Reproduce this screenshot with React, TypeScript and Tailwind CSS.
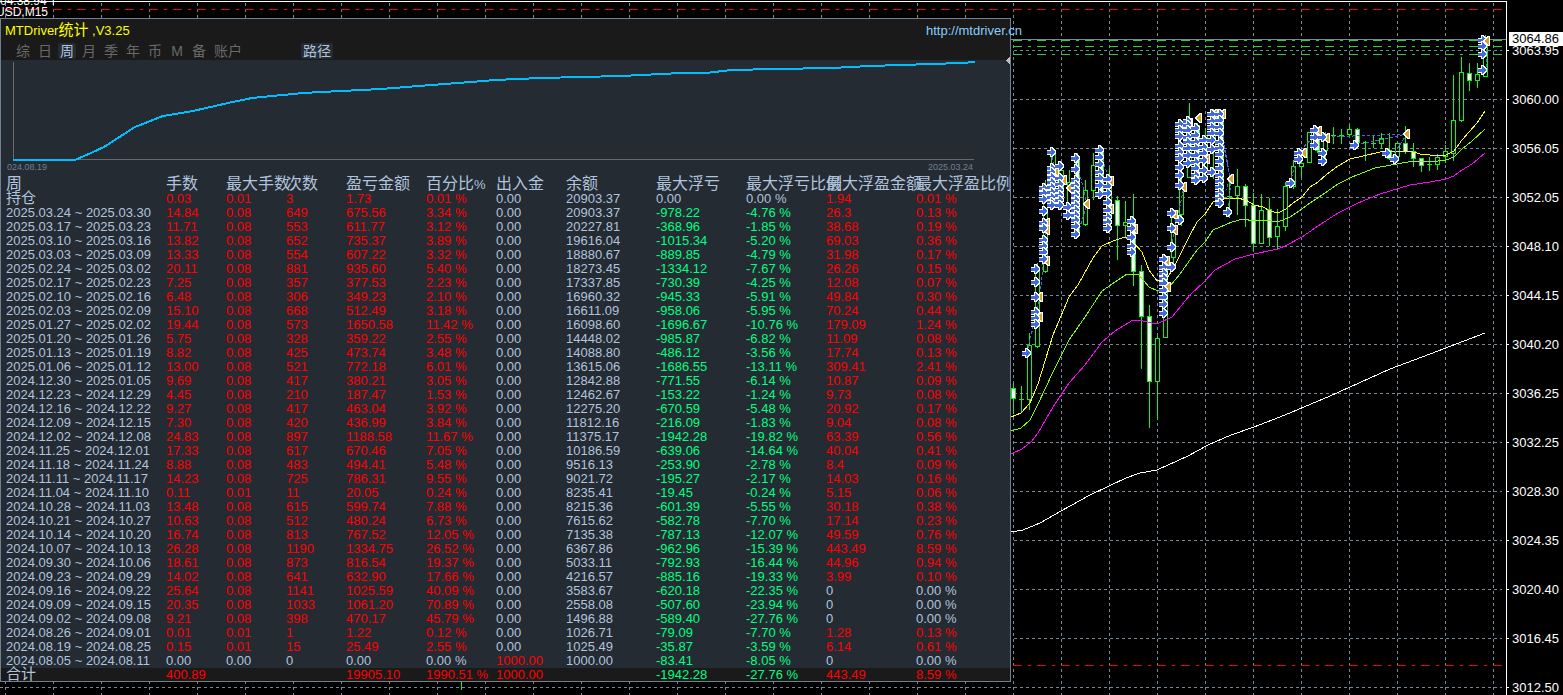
import React from "react";

type Tone = "red" | "green" | "plain";

const HEADERS = ["周", "手数", "最大手数", "次数", "盈亏金额", "百分比%", "出入金", "余额", "最大浮亏", "最大浮亏比例", "最大浮盈金额", "最大浮盈比例"];

// period | lots | max lots | count | profit | percent | deposit | balance | drawdown | drawdown % | float profit | float profit %
const ROWS = `持仓|0.03|0.01|3|1.73|0.01 %|0.00|20903.37|0.00|0.00 %|1.94|0.01 %
2025.03.24 ~ 2025.03.30|14.84|0.08|649|675.56|3.34 %|0.00|20903.37|-978.22|-4.76 %|26.3|0.13 %
2025.03.17 ~ 2025.03.23|11.71|0.08|553|611.77|3.12 %|0.00|20227.81|-368.96|-1.85 %|38.68|0.19 %
2025.03.10 ~ 2025.03.16|13.82|0.08|652|735.37|3.89 %|0.00|19616.04|-1015.34|-5.20 %|69.03|0.36 %
2025.03.03 ~ 2025.03.09|13.33|0.08|554|607.22|3.32 %|0.00|18880.67|-889.85|-4.79 %|31.98|0.17 %
2025.02.24 ~ 2025.03.02|20.11|0.08|881|935.60|5.40 %|0.00|18273.45|-1334.12|-7.67 %|26.26|0.15 %
2025.02.17 ~ 2025.02.23|7.25|0.08|357|377.53|2.23 %|0.00|17337.85|-730.39|-4.25 %|12.08|0.07 %
2025.02.10 ~ 2025.02.16|6.48|0.08|306|349.23|2.10 %|0.00|16960.32|-945.33|-5.91 %|49.84|0.30 %
2025.02.03 ~ 2025.02.09|15.10|0.08|668|512.49|3.18 %|0.00|16611.09|-958.06|-5.95 %|70.24|0.44 %
2025.01.27 ~ 2025.02.02|19.44|0.08|573|1650.58|11.42 %|0.00|16098.60|-1696.67|-10.76 %|179.09|1.24 %
2025.01.20 ~ 2025.01.26|5.75|0.08|328|359.22|2.55 %|0.00|14448.02|-985.87|-6.82 %|11.09|0.08 %
2025.01.13 ~ 2025.01.19|8.82|0.08|425|473.74|3.48 %|0.00|14088.80|-486.12|-3.56 %|17.74|0.13 %
2025.01.06 ~ 2025.01.12|13.00|0.08|521|772.18|6.01 %|0.00|13615.06|-1686.55|-13.11 %|309.41|2.41 %
2024.12.30 ~ 2025.01.05|9.69|0.08|417|380.21|3.05 %|0.00|12842.88|-771.55|-6.14 %|10.87|0.09 %
2024.12.23 ~ 2024.12.29|4.45|0.08|210|187.47|1.53 %|0.00|12462.67|-153.22|-1.24 %|9.73|0.08 %
2024.12.16 ~ 2024.12.22|9.27|0.08|417|463.04|3.92 %|0.00|12275.20|-670.59|-5.48 %|20.92|0.17 %
2024.12.09 ~ 2024.12.15|7.30|0.08|420|436.99|3.84 %|0.00|11812.16|-216.09|-1.83 %|9.04|0.08 %
2024.12.02 ~ 2024.12.08|24.83|0.08|897|1188.58|11.67 %|0.00|11375.17|-1942.28|-19.82 %|63.39|0.56 %
2024.11.25 ~ 2024.12.01|17.33|0.08|617|670.46|7.05 %|0.00|10186.59|-639.06|-14.64 %|40.04|0.41 %
2024.11.18 ~ 2024.11.24|8.88|0.08|483|494.41|5.48 %|0.00|9516.13|-253.90|-2.78 %|8.4|0.09 %
2024.11.11 ~ 2024.11.17|14.23|0.08|725|786.31|9.55 %|0.00|9021.72|-195.27|-2.17 %|14.03|0.16 %
2024.11.04 ~ 2024.11.10|0.11|0.01|11|20.05|0.24 %|0.00|8235.41|-19.45|-0.24 %|5.15|0.06 %
2024.10.28 ~ 2024.11.03|13.48|0.08|615|599.74|7.88 %|0.00|8215.36|-601.39|-5.55 %|30.18|0.38 %
2024.10.21 ~ 2024.10.27|10.63|0.08|512|480.24|6.73 %|0.00|7615.62|-582.78|-7.70 %|17.14|0.23 %
2024.10.14 ~ 2024.10.20|16.74|0.08|813|767.52|12.05 %|0.00|7135.38|-787.13|-12.07 %|49.59|0.76 %
2024.10.07 ~ 2024.10.13|26.28|0.08|1190|1334.75|26.52 %|0.00|6367.86|-962.96|-15.39 %|443.49|8.59 %
2024.09.30 ~ 2024.10.06|18.61|0.08|873|816.54|19.37 %|0.00|5033.11|-792.93|-16.44 %|44.96|0.94 %
2024.09.23 ~ 2024.09.29|14.02|0.08|641|632.90|17.66 %|0.00|4216.57|-885.16|-19.33 %|3.99|0.10 %
2024.09.16 ~ 2024.09.22|25.64|0.08|1141|1025.59|40.09 %|0.00|3583.67|-620.18|-22.35 %|0|0.00 %
2024.09.09 ~ 2024.09.15|20.35|0.08|1033|1061.20|70.89 %|0.00|2558.08|-507.60|-23.94 %|0|0.00 %
2024.09.02 ~ 2024.09.08|9.21|0.08|398|470.17|45.79 %|0.00|1496.88|-589.40|-27.76 %|0|0.00 %
2024.08.26 ~ 2024.09.01|0.01|0.01|1|1.22|0.12 %|0.00|1026.71|-79.09|-7.70 %|1.28|0.13 %
2024.08.19 ~ 2024.08.25|0.15|0.01|15|25.49|2.55 %|0.00|1025.49|-35.87|-3.59 %|6.14|0.61 %
2024.08.05 ~ 2024.08.11|0.00|0.00|0|0.00|0.00 %|1000.00|1000.00|-83.41|-8.05 %|0|0.00 %`
  .split("\n")
  .map((line) => line.split("|"));

const TOTAL = "合计|400.89|||19905.10|1990.51 %|1000.00||-1942.28|-27.76 %|443.49|8.59 %".split("|");

const TONES: Record<Tone, string> = {
  red: "text-[#ff0000]",
  green: "text-[#00ff7f]",
  plain: "text-[#b0c4de]",
};

function toneOf(value: string, column: number): Tone {
  if (column === 0 || column === 7) return "plain";
  const n = parseFloat(value);
  if (n > 0) return "red";
  if (n < 0) return "green";
  return "plain";
}

function Cells({ row }: { row: string[] }) {
  return (
    <>
      {row.map((value, i) => (
        <td key={i} className={`whitespace-nowrap p-0 ${i === 0 ? "pl-[5px]" : ""} ${TONES[toneOf(value, i)]}`}>
          {i === 0 && !value.startsWith("20") ? <span className="text-[15px] leading-[8px]">{value}</span> : value}
        </td>
      ))}
    </>
  );
}

function StatsTable() {
  return (
    <div className="overflow-x-clip">
      <table className="w-full table-fixed border-collapse text-left text-[13px] leading-[14px]">
        <colgroup>
          <col className="w-[165px]" />
          <col className="w-[60px]" />
          <col className="w-[60px]" />
          <col className="w-[60px]" />
          <col className="w-[80px]" />
          <col className="w-[70px]" />
          <col className="w-[70px]" />
          <col className="w-[90px]" />
          <col className="w-[90px]" />
          <col className="w-[80px]" />
          <col className="w-[90px]" />
          <col />
        </colgroup>
        <thead>
          <tr className="h-[14px] text-[#b0c4de]">
            {HEADERS.map((h, i) => (
              <th key={h} scope="col" className={`whitespace-nowrap p-0 font-normal ${i === 0 ? "pl-[5px]" : ""}`}>
                <span className="text-[16px] leading-[8px]">{h.replace("%", "")}</span>
                {h.endsWith("%") ? "%" : ""}
              </th>
            ))}
          </tr>
        </thead>
        <tbody>
          {ROWS.map((row) => (
            <tr key={row[0]} className="h-[14px]">
              <Cells row={row} />
            </tr>
          ))}
        </tbody>
        <tfoot>
          <tr className="h-[13px] bg-[#1a1a1a] leading-[13px]">
            <Cells row={TOTAL} />
          </tr>
        </tfoot>
      </table>
    </div>
  );
}

const EQUITY = "12,100 74,100 90,93 103,87 134,67 162,56 192,51 227,43 251,38 302,33 340,31 380,29 430,25 470,22 494,20 540,18 620,16 680,13 705,13 730,10 775,9 830,8 850,7 869,6 900,5 930,4 960,3 974,2";

function EquityChart() {
  return (
    <section className="h-[118px] bg-[#252b33]">
      <svg viewBox="0 0 1009 102" className="block h-[102px] w-full overflow-visible" shapeRendering="crispEdges" aria-label="equity">
        <path d="M12.5 2V100M12 99.5H973" stroke="#696969" fill="none" />
        <polyline points={EQUITY} fill="none" stroke="#00bfff" strokeWidth="2" />
        <path d="M1009 -4V5L1005 0.5Z" fill="#c0c0c0" />
      </svg>
      <div className="flex justify-between pl-[6px] pr-[37px] text-[9px] leading-[10px] text-[#708090]">
        <span className="flex w-[40px] justify-end overflow-hidden">2024.08.19</span>
        <span>2025.03.24</span>
      </div>
    </section>
  );
}

const TABS = ["综", "日", "周", "月", "季", "年", "币", "M", "备", "账户"];

function StatsPanel() {
  return (
    <div className="absolute left-0 top-[18px] w-[1011px] border border-[#708090] bg-[#252b33]">
      <header className="h-[41px] bg-[#1a1a1a]">
        <div className="flex h-[23px] items-center justify-between pl-[4px]">
          <h1 className="whitespace-nowrap text-[13px] leading-[20px] text-[#ffff00]">
            MTDriver<span className="text-[15px]">统计</span> ,V3.25
          </h1>
          <a href="http://mtdriver.cn" className="w-[84px] whitespace-nowrap text-[13px] leading-[20px] text-[#87cefa]">
            http://mtdriver.cn
          </a>
        </div>
        <nav className="flex h-[18px] items-center pl-[11px] text-[14px] leading-[16px] text-[#696969]">
          {TABS.map((tab) => (
            <button key={tab} type="button" className={`flex h-[16px] justify-center ${tab === "账户" ? "w-[36px]" : "w-[22px]"}`}>
              <span className={tab === "周" ? "h-[16px] rounded-xs bg-[#252b33] px-[2px] text-[#b0c4de]" : "h-[16px]"}>{tab}</span>
            </button>
          ))}
          <button type="button" className="ml-[55px] h-[16px] w-[32px] rounded-xs bg-[#252b33] text-[#b0c4de]">
            路径
          </button>
        </nav>
      </header>
      <EquityChart />
      <StatsTable />
    </div>
  );
}

// x, high, low, body top, body bottom, kind (f = filled, h = hollow, d = doji)
const CANDLES: [number, number, number, number, number, string][] = [
  [1013, 383, 413, 388, 398, "f"], [1021, 386, 411, 399, 399, "d"], [1029, 333, 409, 345, 399, "h"],
  [1037, 263, 347, 271, 346, "h"], [1045, 180, 272, 190, 271, "h"], [1053, 150, 207, 152, 203, "h"],
  [1061, 167, 200, 170, 192, "h"], [1069, 170, 215, 182, 205, "h"], [1077, 153, 237, 157, 233, "f"],
  [1085, 180, 225, 190, 224, "h"], [1093, 153, 199, 165, 190, "h"], [1101, 147, 197, 149, 194, "f"],
  [1109, 168, 218, 177, 216, "h"], [1117, 196, 259, 200, 225, "f"], [1125, 201, 237, 222, 225, "h"],
  [1133, 194, 285, 221, 271, "f"], [1141, 265, 368, 271, 316, "f"], [1149, 305, 427, 316, 381, "f"],
  [1157, 336, 419, 338, 381, "h"], [1165, 255, 337, 257, 337, "h"], [1173, 212, 268, 213, 257, "h"],
  [1181, 177, 225, 187, 214, "h"], [1189, 103, 177, 123, 177, "h"], [1197, 123, 183, 125, 180, "f"],
  [1205, 128, 180, 135, 170, "h"], [1213, 109, 178, 112, 150, "h"], [1221, 111, 197, 114, 195, "f"],
  [1229, 177, 217, 196, 196, "d"], [1237, 169, 214, 186, 195, "h"], [1245, 184, 226, 186, 205, "f"],
  [1253, 193, 250, 205, 243, "f"], [1261, 194, 243, 210, 243, "h"], [1269, 198, 245, 209, 237, "f"],
  [1277, 209, 249, 226, 236, "h"], [1285, 182, 230, 186, 226, "h"], [1293, 160, 188, 166, 186, "h"],
  [1301, 149, 177, 163, 166, "h"], [1309, 132, 162, 132, 162, "h"], [1317, 127, 152, 130, 150, "f"],
  [1325, 132, 162, 140, 150, "h"], [1333, 127, 143, 135, 135, "d"], [1341, 129, 143, 135, 135, "d"],
  [1349, 125, 135, 129, 134, "h"], [1357, 128, 147, 129, 142, "f"], [1365, 141, 160, 142, 142, "d"],
  [1373, 136, 147, 143, 143, "d"], [1381, 133, 148, 138, 143, "h"], [1389, 133, 159, 150, 158, "f"],
  [1397, 143, 157, 143, 156, "h"], [1405, 126, 153, 143, 151, "f"], [1413, 143, 166, 151, 158, "f"],
  [1421, 158, 171, 158, 165, "f"], [1429, 157, 170, 164, 164, "d"], [1437, 154, 169, 157, 164, "h"],
  [1445, 145, 162, 151, 156, "h"], [1453, 75, 160, 120, 153, "h"], [1461, 57, 121, 72, 120, "h"],
  [1469, 63, 90, 73, 80, "f"], [1477, 63, 87, 74, 80, "h"], [1485, 35, 76, 41, 76, "h"],
];

// Buy arrows grouped by column: x, then the price levels in pixels.
const ARROWS: [number, number[]][] = [
  [1026, [353]],
  [1035, [269, 282, 297, 312, 318, 324]],
  [1043, [188, 193, 199, 211, 223, 228, 240, 246, 252, 259]],
  [1051, [152, 168, 172, 177, 182, 187, 192, 197, 202, 205]],
  [1059, [166, 178, 184, 190, 195, 200, 205]],
  [1067, [207, 215]],
  [1075, [158, 169, 180, 185, 190, 195, 200, 205, 210, 215, 220, 226, 234]],
  [1099, [150, 157, 164, 172, 178, 185, 194]],
  [1107, [179, 186, 193, 202, 210, 217, 222, 228]],
  [1131, [221, 228, 237, 246, 252]],
  [1163, [259, 267, 273, 278, 283, 290, 297, 304, 313]],
  [1171, [213, 228, 247, 267]],
  [1179, [124, 130, 136, 146, 152, 158, 167, 175, 185, 220]],
  [1187, [121, 125, 130, 137, 142, 148, 155, 163]],
  [1195, [128, 135, 142, 148, 155, 162, 168, 175, 180]],
  [1203, [140, 147, 153, 160, 170, 178]],
  [1211, [114, 121, 127, 133, 140, 149, 172]],
  [1219, [114, 120, 127, 133, 142, 148, 154, 161, 168, 175, 181, 187, 193, 198, 203]],
  [1227, [212]],
  [1290, [183]],
  [1298, [153, 159]],
  [1314, [130, 137, 145]],
  [1322, [137, 153, 161]],
  [1354, [145]],
  [1386, [153]],
  [1394, [159]],
  [1482, [40, 46, 54, 70]],
];

const CLOSES: [number, number][] = [
  [1040, 297], [1040, 317], [1046, 190], [1047, 223], [1047, 230], [1047, 261], [1056, 171], [1064, 180], [1070, 188],
  [1087, 204], [1111, 181], [1111, 209], [1135, 229], [1167, 261], [1168, 287], [1175, 215], [1175, 230], [1184, 187],
  [1190, 123], [1199, 118], [1207, 159], [1215, 114], [1223, 114], [1231, 179], [1304, 153], [1319, 131], [1327, 138],
  [1407, 134], [1487, 41],
];

const YELLOW = "1011,417 1021,413 1030,403 1038,384 1053,335 1069,297 1078,285 1093,258 1102,246 1113,241 1125,237 1133,242 1142,252 1149,270 1157,281 1168,277 1175,265 1190,235 1197,222 1205,214 1213,202 1222,199 1237,198 1246,200 1254,205 1263,207 1270,211 1278,213 1286,209 1293,203 1302,197 1310,187 1318,182 1327,174 1338,166 1350,159 1363,156 1380,152 1400,151 1410,151 1420,154 1430,155 1446,155 1454,151 1462,140 1477,123 1485,111";
const LIME = "1011,431 1021,428 1030,420 1038,404 1053,372 1069,340 1085,317 1102,291 1115,282 1127,274 1138,274 1149,287 1158,291 1170,286 1180,274 1197,250 1205,242 1213,230 1232,222 1243,219 1254,221 1266,220 1278,222 1290,217 1302,209 1310,203 1325,193 1338,184 1352,177 1375,168 1397,164 1413,161 1430,162 1446,160 1454,157 1462,149 1472,141 1485,129";
const MAGENTA = "1011,454 1022,449 1032,441 1038,433 1053,407 1069,383 1085,365 1102,342 1115,331 1133,320 1143,321 1157,324 1172,317 1190,295 1205,281 1215,270 1235,259 1254,254 1278,249 1287,245 1302,237 1318,226 1338,213 1358,203 1380,194 1410,185 1430,182 1446,179 1454,176 1462,170 1472,164 1485,153";
const WHITE = "1011,532 1023,530 1040,523 1061,511 1090,495 1109,486 1126,478 1140,473 1157,470 1188,456 1208,445 1231,435 1254,427 1285,415 1330,396 1390,369 1430,354 1485,333";

const GRID_X = Array.from({ length: 32 }, (_, i) => 5.5 + i * 48);
const GRID_Y = Array.from({ length: 14 }, (_, i) => 50.5 + i * 49);

function PriceChart() {
  return (
    <svg viewBox="0 0 1507 695" preserveAspectRatio="xMaxYMin slice" className="block h-full min-w-0 flex-1" shapeRendering="crispEdges" aria-label="price chart">
      <defs>
        <g id="buy">
          <path d="M-4 -2H-1V-5H1L5 -1V1L1 5H-1V3H-4Z" fill="#ffffff" />
          <path d="M-4 -1H0V-4L4 0V1L0 4V2H-4Z" fill="#4169e1" />
        </g>
        <g id="close">
          <path d="M3 -5V5H1L-4 1V-1L1 -5Z" fill="#ffffff" />
          <path d="M2 -4V4L-3 0Z" fill="#daa520" />
        </g>
      </defs>
      <g stroke="#778899" strokeDasharray="3 3">
        {GRID_X.map((x) => <line key={x} x1={x} x2={x} y1="3" y2="695" />)}
        {GRID_Y.map((y) => <line key={y} x1="0" x2="1502" y1={y} y2={y} />)}
      </g>
      <path d="M5 9.5H1502M1013 665.5H1502" stroke="#ff0000" strokeDasharray="9 6 3 6" />
      <path d="M1011 39.5H1506" stroke="#778899" />
      <path d="M1013 40.5H1502M1013 46.5H1502M1013 54.5H1502" stroke="#32cd32" strokeDasharray="9 6 3 6" />
      <path d="M461.5 682V690" stroke="#00ff00" />
      {CANDLES.map(([x, high, low, top, bottom, kind]) => (
        <g key={x}>
          <rect x={x} y={high} width="1" height={low - high + 1} fill="#00ff00" />
          {kind === "d" ? (
            <rect x={x - 2} y={top} width="5" height="1" fill="#00ff00" />
          ) : (
            <rect x={x - 1.5} y={top + 0.5} width="4" height={Math.max(2, bottom - top)} stroke="#00ff00" fill={kind === "f" ? "#ffffff" : "#000000"} />
          )}
        </g>
      ))}
      <g fill="none">
        <polyline points={YELLOW} stroke="#ffff00" />
        <polyline points={LIME} stroke="#7fff00" />
        <polyline points={MAGENTA} stroke="#ff00ff" />
        <polyline points={WHITE} stroke="#ffffff" />
        <path
          d="M1027 353L1040 297L1042 275L1047 223M1051 152L1060 190M1076 158L1087 204L1079 230M1099 150L1110 181M1171 247L1184 187M1221 114L1224 150L1231 179L1228 212M1222 130L1230 178L1226 190M1290 183L1298 153L1319 131M1327 137L1407 134L1391 158M1356 145L1407 134M1486 44V70"
          stroke="#4169e1"
          strokeDasharray="3 2"
        />
      </g>
      {CLOSES.map(([x, y]) => <use key={`${x}-${y}`} href="#close" x={x} y={y} />)}
      {ARROWS.map(([x, ys]) => ys.map((y) => <use key={`${x}-${y}`} href="#buy" x={x} y={y} />))}
      <use href="#close" x="1487" y="41" />
      <path d="M0 1.5H1506.5V695" fill="none" stroke="#ffffff" />
    </svg>
  );
}

const PRICES = ["3063.95", "3060.00", "3056.05", "3052.05", "3048.10", "3044.15", "3040.20", "3036.25", "3032.25", "3028.30", "3024.35", "3020.40", "3016.45", "3012.50"];

function PriceScale() {
  return (
    <aside className="relative w-[56px] shrink-0 overflow-hidden pt-[26px] text-[13px] leading-[14px] text-white">
      <ul>
        {PRICES.map((p) => (
          <li key={p} className="flex h-[49px] items-center gap-[3px]">
            <span className="h-px w-[2px] bg-white" />
            {p}
          </li>
        ))}
      </ul>
      <div className="absolute left-[2px] right-0 top-[32px] bg-white pl-[3px] text-black">3064.86</div>
    </aside>
  );
}

export default function App() {
  return (
    <main className="relative flex h-screen overflow-hidden bg-black font-['Liberation_Sans','Noto_Sans_CJK_SC',sans-serif]">
      <PriceChart />
      <PriceScale />
      <div className="absolute left-0 top-0 h-[18px] w-[54px] overflow-hidden whitespace-nowrap text-[12px] text-white">
        <div className="flex h-[6px] items-end leading-[10px]">04:38:94 TD</div>
        <div className="flex h-[12px] w-[48px] items-center justify-end leading-[12px]">USD,M15</div>
      </div>
      <StatsPanel />
    </main>
  );
}
